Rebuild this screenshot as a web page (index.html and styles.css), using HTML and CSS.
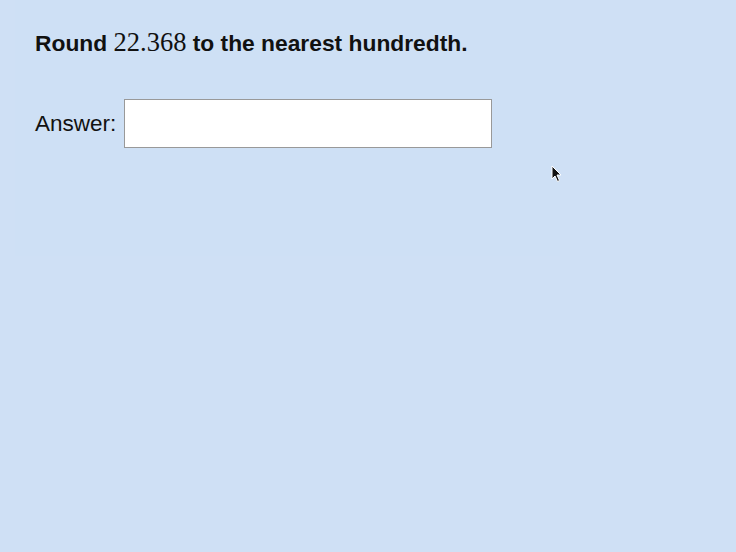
FILE: index.html
```html
<!DOCTYPE html>
<html>
<head>
<meta charset="utf-8">
<link rel="stylesheet" href="styles.css">
</head>
<body>
<div class="panel">
  <p class="question">Round <span class="num">22.368</span> to the nearest hundredth.</p>
  <div class="answer-row">
    <label class="label" for="ans">Answer:</label>
    <input class="answer" id="ans" type="text">
  </div>
</div>
<svg class="cursor" width="12" height="18" viewBox="0 0 12 18"><path d="M1 1 L1 14 L4 11 L6.5 16.5 L8.5 15.5 L6 10 L10 10 Z" fill="#111" stroke="#fff" stroke-width="1"/></svg>
</body>
</html>
```
FILE: styles.css
```css
html, body {
  margin: 0;
  padding: 0;
  background: #cfe0f5;
  width: 736px;
  height: 552px;
  overflow: hidden;
}
body {
  font-family: "Liberation Sans", Arial, sans-serif;
  color: #111;
  position: relative;
}
.panel {
  margin-left: 15px;
  width: 545px;
  height: 256px;
  padding: 25px 0 0 20px;
  box-sizing: border-box;
  background: #cee0f5;
}
.question {
  margin: 0;
  font-weight: 700;
  font-size: 22.8px;
  line-height: 34px;
}
.num {
  font-family: "Liberation Serif", serif;
  font-weight: 400;
  font-size: 26.5px;
}
.answer-row {
  margin-top: 39px;
  display: flex;
  align-items: center;
  gap: 8px;
}
.label {
  font-size: 22.5px;
}
.answer {
  width: 368px;
  height: 49px;
  box-sizing: border-box;
  border: 1px solid #999;
  background: #fff;
  margin: 0;
  padding: 0 8px;
}
.cursor {
  position: absolute;
  left: 551px;
  top: 165px;
}
```
